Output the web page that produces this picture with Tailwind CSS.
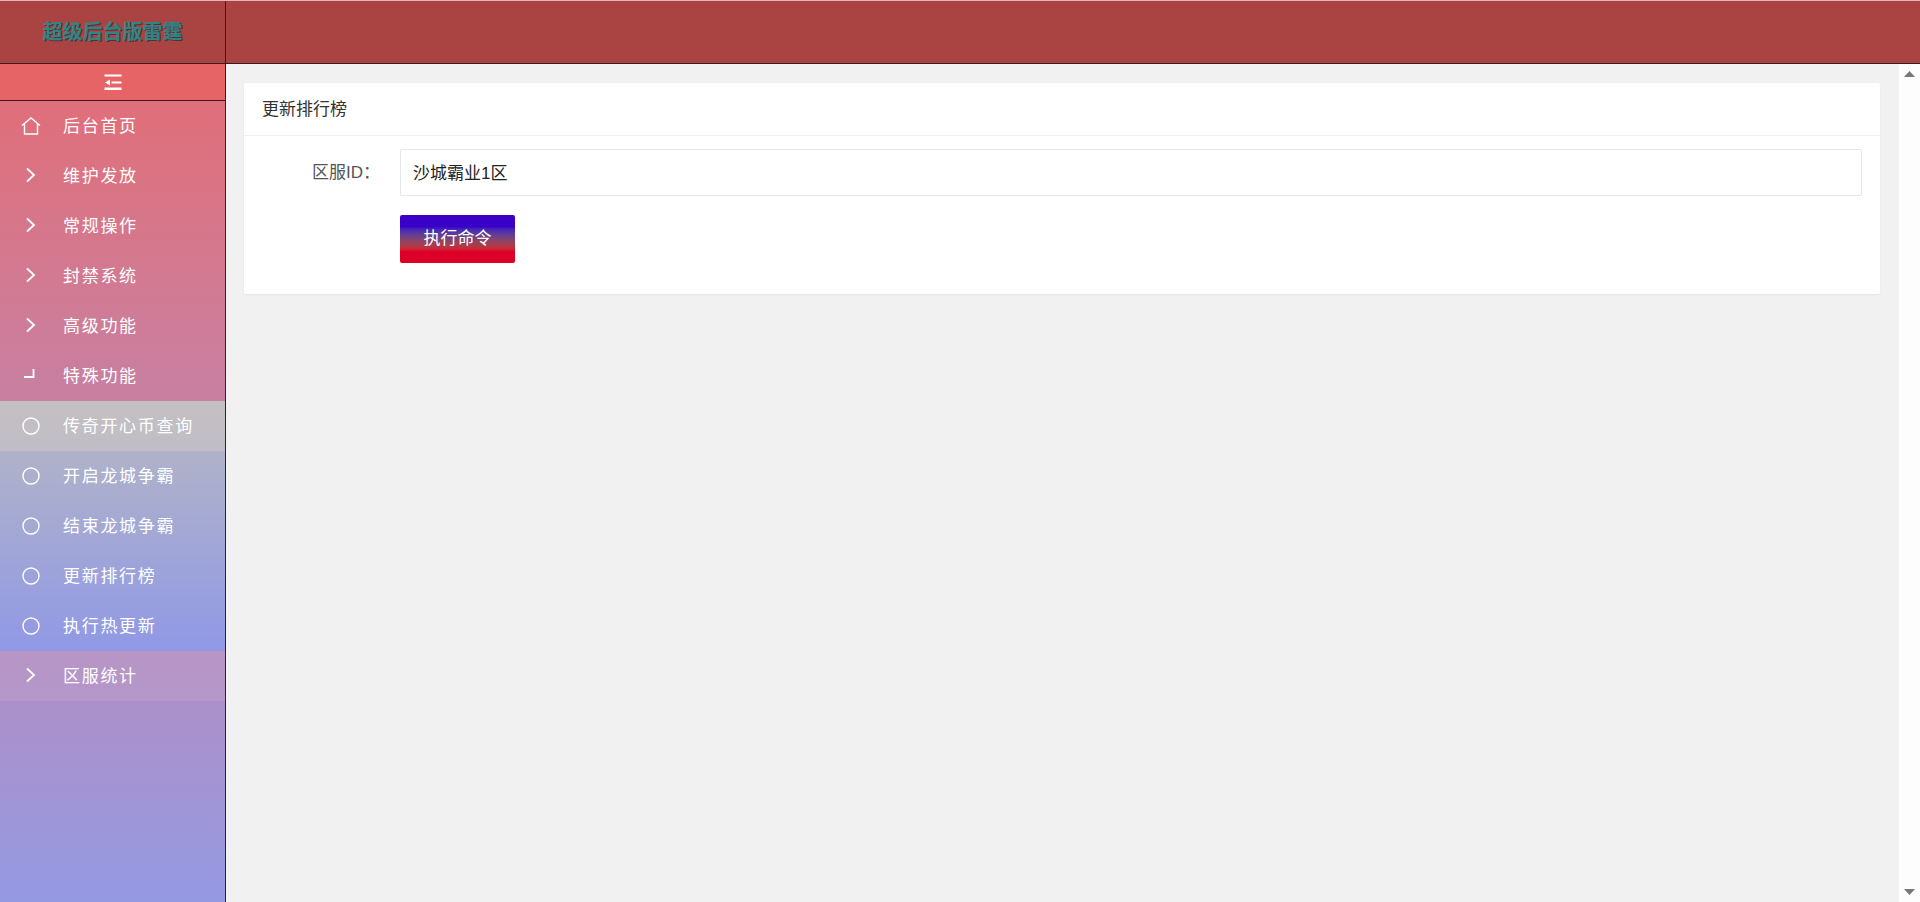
<!DOCTYPE html>
<html lang="zh-CN">
<head>
    <meta charset="UTF-8">
    <meta name="viewport" content="width=device-width, initial-scale=1.0">
    <title>更新排行榜</title>
    <script src="https://cdn.jsdelivr.net/npm/@tailwindcss/browser@4"></script>
</head>
<body class="h-screen flex flex-col overflow-hidden bg-[#f1f1f1] text-[17px] leading-6 font-['Liberation_Sans','Noto_Sans_CJK_SC',sans-serif]">

    <!-- Header -->
    <header class="flex shrink-0 h-16 bg-[#a94442] border-t border-t-[#e6b3b3] border-b border-b-[#3a1c20]">
        <a href="#" class="w-[226px] shrink-0 border-r border-[#3a1c20] flex items-center justify-center text-xl font-bold text-[#2f8583] text-shadow-[1px_1px_0_#5a3038]">超级后台版雷霆</a>
    </header>

    <div class="flex flex-1 min-h-0">
        <!-- Sidebar -->
        <aside class="w-[226px] shrink-0 flex flex-col border-r border-[#23233a] bg-linear-to-b from-[#e36c74] via-[#c084ac] via-50% to-[#9499e2] text-white">
            <button type="button" aria-label="收起菜单" class="h-[37px] shrink-0 flex items-center justify-center bg-[#e66465] border-b border-[#3a1c20]">
                <svg class="w-5 h-5" viewBox="0 0 20 20" fill="currentColor"><path d="M1.500 2.500h17v2h-17zM8.500 9.500h10v2h-10zM1.500 15.500h17V18h-17zM7 7.500v6L2 10.500z"/></svg>
            </button>
            <nav id="menu" class="tracking-widest"></nav>
        </aside>

        <!-- Content -->
        <main class="flex-1 min-w-0 pt-[19px] pr-[19px] pl-[18px]">
            <section class="bg-white rounded-xs shadow-xs">
                <h1 class="h-[53px] pt-0.5 px-[18px] flex items-center border-b border-[#f1f1f1] text-[#333]">更新排行榜</h1>
                <form class="px-[18px] pt-[13px] pb-[31px]">
                    <div class="flex items-center mb-[19px]">
                        <label for="server" class="w-[138px] pr-5 text-right shrink-0 text-[#555]">区服ID：</label>
                        <input id="server" type="text" value="沙城霸业1区" class="flex-1 min-w-0 h-[47px] px-3 pb-0.5 border border-[#e6e6e6] rounded-xs bg-white text-[#222]">
                    </div>
                    <button type="button" class="ml-[138px] w-[115px] h-12 rounded-xs text-white bg-linear-to-b from-[#3a00c8] from-25% via-[#a04050] via-60% to-[#dc0028] to-75%">执行命令</button>
                </form>
            </section>
        </main>

        <!-- Scroll track -->
        <div class="w-[21px] shrink-0 py-[7px] flex flex-col items-center justify-between bg-[#fdfdfd] text-[#77777d]" aria-hidden="true">
            <svg class="w-[11px] h-[6px]" viewBox="0 0 11 6" fill="currentColor"><path d="M5.500 0 11 6H0z"/></svg>
            <svg class="w-[11px] h-[6px]" viewBox="0 0 11 6" fill="currentColor"><path d="M0 0h11L5.500 6z"/></svg>
        </div>
    </div>

    <script>
        const icons = {
            home: '<path d="M1 8.500 10 1 19 8.500M3.500 6.500V17h13V6.500"/>',
            right: '<path stroke-width="1.800" d="M6 1.500 13 8 6 14.500"/>',
            open: '<path stroke-width="1.800" d="M3 10h9.500V2"/>',
            circle: '<circle cx="10" cy="9" r="8"/>'
        };

        const items = [
            { text: "后台首页", icon: "home" },
            { text: "维护发放", icon: "right" },
            { text: "常规操作", icon: "right" },
            { text: "封禁系统", icon: "right" },
            { text: "高级功能", icon: "right" },
            { text: "特殊功能", icon: "open", children: ["传奇开心币查询", "开启龙城争霸", "结束龙城争霸", "更新排行榜", "执行热更新"] },
            { text: "区服统计", icon: "right", cls: "bg-[#c0a0cc]/45" }
        ];

        function row(text, icon, cls) {
            return `<a href="#" class="h-[50px] pt-0.5 pl-[21px] flex items-center gap-[22px] ${cls || ""}">
                <svg class="w-5 h-5" viewBox="0 0 20 20" fill="none" stroke="currentColor" stroke-width="1.400">${icons[icon]}</svg>
                <span>${text}</span>
            </a>`;
        }

        document.getElementById("menu").innerHTML = items.map(item => {
            let html = row(item.text, item.icon, item.cls);
            if (item.children) {
                html += `<div class="bg-linear-to-b from-[#b8b8c0] to-[#9198e5]">` +
                    item.children.map((t, i) => row(t, "circle", i === 0 ? "bg-[#d0c8c4]/50" : "")).join("") +
                    `</div>`;
            }
            return html;
        }).join("");
    </script>

</body>
</html>
